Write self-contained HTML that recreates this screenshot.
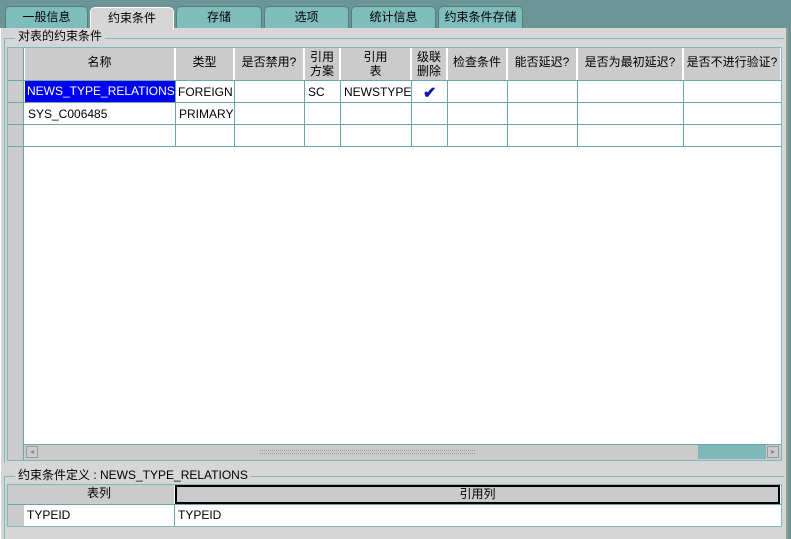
<!DOCTYPE html>
<html><head><meta charset="utf-8"><style>
*{margin:0;padding:0;box-sizing:border-box}
body{width:791px;height:539px;background:#6c9696;position:relative;overflow:hidden;font-family:"Liberation Sans","Noto Sans CJK SC",sans-serif;font-size:12px;color:#000}
.a{position:absolute}
.tab{position:absolute;top:6px;height:22px;background:#7fbdbd;border:1px solid #4f8080;border-bottom:none;border-radius:5px 5px 0 0;text-align:center;line-height:21px;font-size:12px}
.panel{left:0;top:28px;width:788px;height:511px;background:#d6d6d6;border-left:1px solid #fff;border-right:2px solid #999}
.hl{background:#6aa8a8}
.hd{position:absolute;background:#cbcbcb;text-align:center;border-right:1px solid #fff;font-size:12px;line-height:14px}
.c{position:absolute;white-space:nowrap;overflow:hidden;line-height:22px;padding-left:3px}
</style></head><body>
<div class="tab" style="left:5px;width:83px">一般信息</div>
<div class="tab" style="left:176px;width:86px">存储</div>
<div class="tab" style="left:264px;width:85px">选项</div>
<div class="tab" style="left:351px;width:85px">统计信息</div>
<div class="tab" style="left:438px;width:85px">约束条件存储</div>
<div class="a panel"></div>
<div class="tab" style="left:90px;width:84px;top:7px;height:23px;background:#d6d6d6;border-color:#fff">约束条件</div>

<div class="a" style="left:4px;top:38px;width:780px;height:1px;background:#7fb8b8"></div>
<div class="a" style="left:4px;top:38px;width:1px;height:425px;background:#7fb8b8"></div>
<div class="a" style="left:15px;top:29px;background:#d6d6d6;padding:0 3px;font-size:12px;line-height:15px">对表的约束条件</div>

<div class="a" style="left:7px;top:47px;width:775px;height:414px;background:#fff;border:1px solid #7fb8b8"></div>
<div class="a" style="left:8px;top:48px;width:16px;height:412px;background:#cbcbcb;border-right:1px solid #6aa8a8"></div>
<div class="hd" style="left:25px;top:48px;width:150px;height:32px;line-height:28px">名称</div>
<div class="hd" style="left:176px;top:48px;width:58px;height:32px;line-height:28px">类型</div>
<div class="hd" style="left:235px;top:48px;width:69px;height:32px;line-height:28px">是否禁用?</div>
<div class="hd" style="left:305px;top:48px;width:35px;height:32px;padding-top:2px">引用<br>方案</div>
<div class="hd" style="left:341px;top:48px;width:70px;height:32px;padding-top:2px">引用<br>表</div>
<div class="hd" style="left:412px;top:48px;width:35px;height:32px;padding-top:2px">级联<br>删除</div>
<div class="hd" style="left:448px;top:48px;width:59px;height:32px;line-height:28px">检查条件</div>
<div class="hd" style="left:508px;top:48px;width:69px;height:32px;line-height:28px">能否延迟?</div>
<div class="hd" style="left:578px;top:48px;width:105px;height:32px;line-height:28px">是否为最初延迟?</div>
<div class="hd" style="left:684px;top:48px;width:97px;height:32px;line-height:28px">是否不进行验证?</div>
<div class="a hl" style="left:8px;top:80px;width:773px;height:1px"></div>
<div class="a hl" style="left:8px;top:102px;width:773px;height:1px"></div>
<div class="a hl" style="left:8px;top:124px;width:773px;height:1px"></div>
<div class="a hl" style="left:8px;top:146px;width:773px;height:1px"></div>
<div class="a hl" style="left:175px;top:81px;width:1px;height:65px"></div>
<div class="a hl" style="left:234px;top:81px;width:1px;height:65px"></div>
<div class="a hl" style="left:304px;top:81px;width:1px;height:65px"></div>
<div class="a hl" style="left:340px;top:81px;width:1px;height:65px"></div>
<div class="a hl" style="left:411px;top:81px;width:1px;height:65px"></div>
<div class="a hl" style="left:447px;top:81px;width:1px;height:65px"></div>
<div class="a hl" style="left:507px;top:81px;width:1px;height:65px"></div>
<div class="a hl" style="left:577px;top:81px;width:1px;height:65px"></div>
<div class="a hl" style="left:683px;top:81px;width:1px;height:65px"></div>
<div class="c" style="left:25px;top:81px;width:150px;height:21px;background:#0000f0;color:#fff;line-height:21px;padding-left:2px">NEWS_TYPE_RELATIONS</div>
<div class="c" style="left:176px;top:81px;width:58px;padding-left:2px">FOREIGN</div>
<div class="c" style="left:305px;top:81px;width:35px">SC</div>
<div class="c" style="left:341px;top:81px;width:70px">NEWSTYPE</div>
<div class="a" style="left:423px;top:83px;color:#1414b4;font-size:16px;font-weight:bold">✔</div>
<div class="c" style="left:25px;top:103px;width:150px">SYS_C006485</div>
<div class="c" style="left:176px;top:103px;width:58px">PRIMARY</div>
<div class="a" style="left:24px;top:444px;width:757px;height:16px;background:#cbcbcb;border-top:1px solid #6aa8a8"></div>
<div class="a" style="left:26px;top:446px;width:12px;height:12px;border:1px solid #999;font-size:8px;color:#888;line-height:10px;text-align:center">◂</div>
<div class="a" style="left:260px;top:450px;width:215px;height:4px;border-top:1px dotted #999;border-bottom:1px dotted #999"></div>
<div class="a" style="left:698px;top:445px;width:68px;height:14px;background:#7fb8b8"></div>
<div class="a" style="left:767px;top:446px;width:12px;height:12px;border:1px solid #999;font-size:8px;color:#888;line-height:10px;text-align:center">▸</div>

<div class="a" style="left:4px;top:476px;width:780px;height:1px;background:#7fb8b8"></div>
<div class="a" style="left:4px;top:476px;width:1px;height:63px;background:#7fb8b8"></div>
<div class="a" style="left:15px;top:468px;background:#d6d6d6;padding:0 3px;font-size:12px;line-height:15px">约束条件定义 : NEWS_TYPE_RELATIONS</div>
<div class="a" style="left:7px;top:484px;width:775px;height:43px;background:#fff;border:1px solid #7fb8b8"></div>
<div class="a" style="left:8px;top:485px;width:16px;height:41px;background:#cbcbcb"></div>
<div class="hd" style="left:24px;top:485px;width:151px;height:19px;line-height:17px">表列</div>
<div class="hd" style="left:175px;top:485px;width:605px;height:19px;line-height:15px;border:2px solid #000">引用列</div>
<div class="a hl" style="left:8px;top:504px;width:773px;height:1px"></div>
<div class="a hl" style="left:174px;top:505px;width:1px;height:21px"></div>
<div class="c" style="left:24px;top:505px;width:150px;line-height:21px">TYPEID</div>
<div class="c" style="left:175px;top:505px;width:150px;line-height:21px">TYPEID</div>
</body></html>
